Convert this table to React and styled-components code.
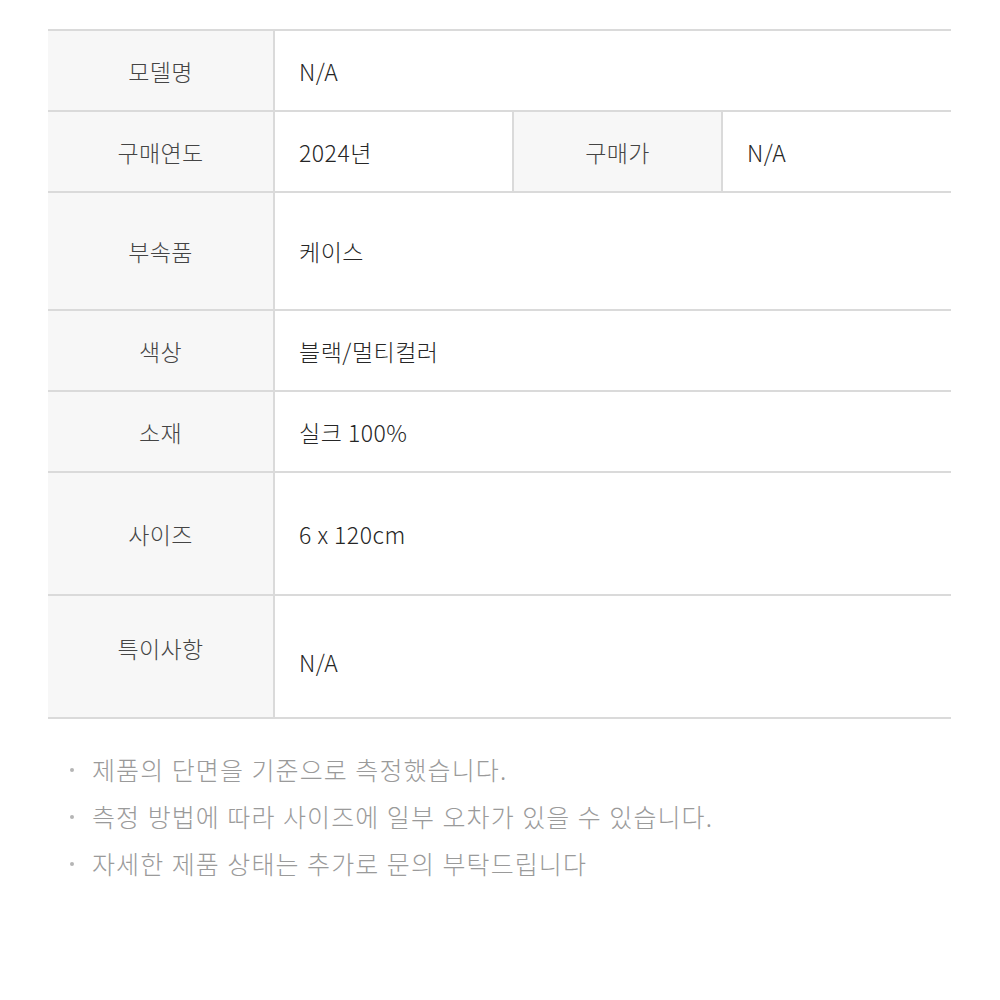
import React from "react";
import styled, { createGlobalStyle } from "styled-components";

const GlobalStyle = createGlobalStyle`
  html, body {
    margin: 0;
    padding: 0;
    background: #ffffff;
  }
  body {
    font-family: "Noto Sans CJK KR", "Noto Sans", sans-serif;
  }
`;

const Page = styled.div`
  width: 1000px;
  height: 1000px;
  box-sizing: border-box;
  padding: 29px 49px 0 48px;
  background: #fff;
`;

const Table = styled.div`
  display: flex;
  flex-direction: column;
  border-top: 2px solid #dadada;
`;

const Row = styled.div`
  display: grid;
  grid-template-columns: ${(p) => (p.$split ? "225px 239px 209px 1fr" : "225px 1fr")};
  height: ${(p) => p.$h}px;
  border-bottom: 2px solid #dadada;
`;

const Label = styled.div`
  display: flex;
  align-items: center;
  justify-content: center;
  background: #f7f7f7;
  color: #444;
  font-size: 23px;
  font-weight: 300;
  letter-spacing: 0.4px;
  box-sizing: border-box;
  padding-bottom: ${(p) => p.$shift || 0}px;
  border-left: ${(p) => (p.$inner ? "2px solid #dadada" : "none")};
`;

const Value = styled.div`
  display: flex;
  align-items: center;
  box-sizing: border-box;
  border-left: 2px solid #dadada;
  padding-left: 24px;
  padding-top: ${(p) => p.$shift || 0}px;
  color: #262626;
  font-size: 23px;
  font-weight: 300;
  letter-spacing: 0.5px;
`;

const Notes = styled.ul`
  list-style: none;
  margin: 32px 0 0;
  padding: 0 0 0 20px;
  display: flex;
  flex-direction: column;
  gap: 11px;
`;

const Note = styled.li`
  position: relative;
  padding-left: 24px;
  color: #9a9a9a;
  font-size: 25px;
  font-weight: 300;
  line-height: 36px;
  letter-spacing: 1.1px;
  word-spacing: 0.8px;

  &::before {
    content: "";
    position: absolute;
    left: 2px;
    top: 17px;
    width: 4px;
    height: 4px;
    border-radius: 50%;
    background: #b5b5b5;
  }
`;

const rows = [
  { label: "모델명", value: "N/A", h: 79 },
  { label: "구매연도", value: "2024년", h: 79, extra: { label: "구매가", value: "N/A" } },
  { label: "부속품", value: "케이스", h: 116 },
  { label: "색상", value: "블랙/멀티컬러", h: 79 },
  { label: "소재", value: "실크 100%", h: 79 },
  { label: "사이즈", value: "6 x 120cm", h: 121 },
  { label: "특이사항", value: "N/A", h: 121, labelShift: 18, valueShift: 11 },
];

const notes = [
  "제품의 단면을 기준으로 측정했습니다.",
  "측정 방법에 따라 사이즈에 일부 오차가 있을 수 있습니다.",
  "자세한 제품 상태는 추가로 문의 부탁드립니다",
];

export default function App() {
  return (
    <>
      <GlobalStyle />
      <Page>
        <Table>
          {rows.map((r) => (
            <Row key={r.label} $h={r.h} $split={!!r.extra}>
              <Label $shift={r.labelShift}>{r.label}</Label>
              <Value $shift={r.valueShift}>{r.value}</Value>
              {r.extra && (
                <>
                  <Label $inner>{r.extra.label}</Label>
                  <Value>{r.extra.value}</Value>
                </>
              )}
            </Row>
          ))}
        </Table>
        <Notes>
          {notes.map((n) => (
            <Note key={n}>{n}</Note>
          ))}
        </Notes>
      </Page>
    </>
  );
}
